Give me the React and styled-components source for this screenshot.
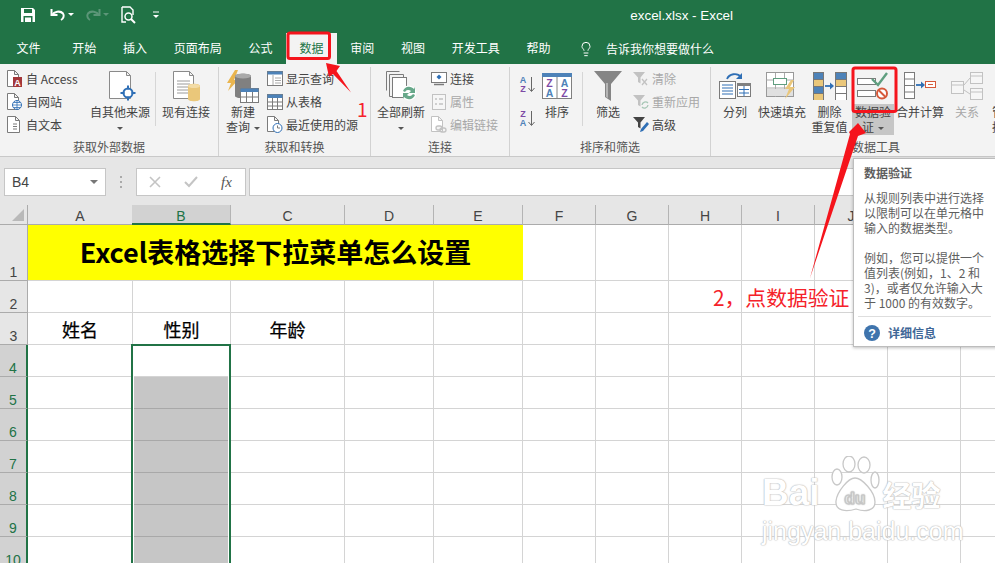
import React from "react";
import styled, { createGlobalStyle } from "styled-components";
import { Lightbulb } from "lucide-react";

const GREEN = "#217346";
const CJK = `"Noto Sans CJK SC", "Liberation Sans", sans-serif`;

const Global = createGlobalStyle`
  html, body { margin: 0; padding: 0; background: #fff; }
  body { font-family: ${CJK}; }
`;

const Page = styled.div`
  position: relative;
  width: 995px;
  height: 563px;
  overflow: hidden;
  background: #fff;
`;

/* title bar */
const TitleBar = styled.div`
  height: 32px;
  padding-bottom: 2px;
  box-sizing: border-box;
  background: ${GREEN};
  display: flex;
  align-items: center;
  color: #fff;
`;
const QuickBar = styled.div`
  display: flex;
  align-items: center;
  padding-left: 20px;
`;
const QuickItem = styled.span`
  display: flex;
  margin-left: ${(p) => p.$ml || 0}px;
`;
const FileName = styled.div`
  margin-left: auto;
  padding-right: 262px;
  font-size: 13.4px;
  font-family: "Liberation Sans", sans-serif;
`;

/* tabs */
const TabBar = styled.div`
  height: 32px;
  background: ${GREEN};
  display: flex;
  align-items: flex-end;
  padding-left: 3px;
`;
const Tab = styled.div`
  height: 31px;
  line-height: 30px;
  padding: 0 13.4px;
  font-size: 12px;
  color: ${(p) => (p.$active ? GREEN : "#fff")};
  background: ${(p) => (p.$active ? "#f3f3f3" : "transparent")};
  margin-right: ${(p) => p.$gap || 0}px;
`;
const TellMe = styled.div`
  display: flex;
  align-items: center;
  gap: 12px;
  margin-left: 14px;
  height: 31px;
  font-size: 12px;
  color: #fff;
`;

/* ribbon */
const Ribbon = styled.div`
  height: 92px;
  background: #f3f3f3;
  border-bottom: 1px solid #c9c9c9;
  box-sizing: content-box;
  display: flex;
  overflow: hidden;
  color: #444;
  font-size: 12px;
`;
const Group = styled.div`
  flex: none;
  width: ${(p) => p.$w}px;
  height: 89px;
  margin-top: 3px;
  box-sizing: border-box;
  border-right: ${(p) => (p.$last ? "none" : "1px solid #d2d2d2")};
  display: flex;
  flex-direction: column;
`;
const GroupBody = styled.div`
  flex: 1;
  display: flex;
  padding-left: ${(p) => p.$pad || 0}px;
`;
const GroupLabel = styled.div`
  height: 19px;
  line-height: 19px;
  text-align: center;
  color: #555;
  white-space: nowrap;
`;
const Large = styled.div`
  flex: none;
  width: ${(p) => p.$w}px;
  display: flex;
  flex-direction: column;
  align-items: center;
  white-space: nowrap;
  color: ${(p) => (p.$dim ? "#a8a8a8" : "#444")};
`;
const LargeIcon = styled.div`
  height: 37px;
  display: flex;
  align-items: center;
  justify-content: center;
`;
const LargeLabel = styled.div`
  line-height: 15px;
  text-align: center;
  align-self: stretch;
  height: ${(p) => (p.$active ? "31px" : "auto")};
  background: ${(p) => (p.$active ? "#c6c6c6" : "transparent")};
`;
const CutLabel = styled.div`
  line-height: 15px;
  align-self: stretch;
  padding-left: 4px;
  text-align: left;
`;
const Caret = styled.span`
  display: inline-block;
  width: 0;
  height: 0;
  margin: 0 0 2px 4px;
  border-left: 3px solid transparent;
  border-right: 3px solid transparent;
  border-top: 3px solid #555;
`;
const CaretLine = styled.div`
  line-height: 15px;
  height: 15px;
  text-align: center;
  ${Caret} { margin-left: 0; }
`;
const SmallCol = styled.div`
  flex: none;
  width: ${(p) => p.$w}px;
  display: flex;
  flex-direction: column;
`;
const SmallItem = styled.div`
  height: ${(p) => p.$h || 23}px;
  display: flex;
  align-items: center;
  gap: 3px;
  padding-left: ${(p) => p.$pad || 0}px;
  white-space: nowrap;
  color: ${(p) => (p.$dim ? "#a8a8a8" : "#444")};
  svg { flex: none; }
`;
const Divider = styled.div`
  flex: none;
  width: 1px;
  height: 54px;
  margin: 5px 0 0 ${(p) => p.$ml || 0}px;
  background: #d6d6d6;
`;

/* formula bar */
const FormulaBar = styled.div`
  height: 48px;
  background: #e6e6e6;
  display: flex;
  padding: 11px 0 0 4px;
  box-sizing: border-box;
`;
const NameBox = styled.div`
  width: 102px;
  height: 28px;
  box-sizing: border-box;
  background: #fff;
  border: 1px solid #c6c6c6;
  display: flex;
  align-items: center;
  justify-content: space-between;
  padding: 0 7px;
  font: 14px "Liberation Sans", sans-serif;
  color: #444;
`;
const NameArrow = styled.span`
  width: 0;
  height: 0;
  border-left: 4px solid transparent;
  border-right: 4px solid transparent;
  border-top: 4px solid #777;
`;
const Grip = styled.div`
  width: 2px;
  margin: 8px 14px 0 14px;
  height: 12px;
  background: repeating-linear-gradient(#aaa 0 2px, transparent 2px 5px);
`;
const FxBox = styled.div`
  width: 110px;
  height: 28px;
  box-sizing: border-box;
  background: #fff;
  border: 1px solid #c6c6c6;
  display: flex;
  align-items: center;
  padding-left: 12px;
  gap: 23px;
  color: #bbb;
`;
const FxLabel = styled.span`
  font: italic 15px "Liberation Serif", serif;
  color: #555;
`;
const FormulaInput = styled.div`
  flex: 1;
  height: 28px;
  margin-left: 3px;
  box-sizing: border-box;
  background: #fff;
  border: 1px solid #c6c6c6;
  border-right: none;
`;

/* sheet */
const Sheet = styled.div`
  height: 358px;
  overflow: hidden;
  display: grid;
  grid-template-columns: ${(p) => p.$cols};
  grid-template-rows: ${(p) => p.$rows};
  background: #fff;
`;
const Corner = styled.div`
  background: #e6e6e6;
  border-bottom: 1px solid #ababab;
  border-right: 1px solid #ababab;
  position: relative;
  box-sizing: border-box;
  &::after {
    content: "";
    position: absolute;
    right: 3px;
    bottom: 3px;
    border-style: solid;
    border-width: 0 0 12px 12px;
    border-color: transparent transparent #b9b9b9 transparent;
  }
`;
const ColHead = styled.div`
  box-sizing: border-box;
  padding-top: 2px;
  margin-left: ${(p) => (p.$sel ? "-1px" : 0)};
  background: ${(p) => (p.$sel ? "#d2d2d2" : "#e6e6e6")};
  color: ${(p) => (p.$sel ? GREEN : "#444")};
  border-right: 1px solid #b4b4b4;
  border-bottom: ${(p) => (p.$sel ? `2px solid ${GREEN}` : "1px solid #ababab")};
  font: 14px/19px "Liberation Sans", sans-serif;
  text-align: center;
`;
const RowHead = styled.div`
  box-sizing: border-box;
  background: ${(p) => (p.$sel ? "#d2d2d2" : "#e6e6e6")};
  color: ${(p) => (p.$sel ? GREEN : "#444")};
  border-bottom: 1px solid #ababab;
  border-right: ${(p) => (p.$sel ? `2px solid ${GREEN}` : "1px solid #ababab")};
  font: 14px/16px "Liberation Sans", sans-serif;
  text-align: center;
  display: flex;
  align-items: flex-end;
  justify-content: center;
`;
const Cell = styled.div`
  box-sizing: border-box;
  border-right: 1px solid #d4d4d4;
  border-bottom: 1px solid #d4d4d4;
`;
const TitleCell = styled.div`
  grid-column: span 5;
  background: #ffff00;
  border-bottom: 1px solid #d4d4d4;
  box-sizing: border-box;
  font-size: 27px;
  font-weight: 700;
  color: #000;
  text-align: center;
  line-height: 54px;
  white-space: nowrap;
`;
const HeadCell = styled(Cell)`
  font-size: 18px;
  line-height: 32px;
  text-align: center;
  color: #000;
  -webkit-text-stroke: 0.25px #000;
`;
const SelCell = styled.div`
  box-sizing: border-box;
  margin: ${(p) => (p.$first ? "-1px" : "0")} 0 0 -2px;
  border-left: 2px solid ${GREEN};
  border-right: 2px solid ${GREEN};
  border-top: ${(p) => (p.$first ? `2px solid ${GREEN}` : "none")};
  padding: 0 1px;
`;
const SelFill = styled.div`
  height: 100%;
  box-sizing: border-box;
  background: ${(p) => (p.$fill ? "#c6c6c6" : "#fff")};
  border-bottom: 1px solid ${(p) => (p.$fill ? "#a8a8a8" : "#d4d4d4")};
`;

/* overlays */
const Tooltip = styled.div`
  position: absolute;
  left: 853px;
  top: 158px;
  width: 150px;
  height: 189px;
  box-sizing: border-box;
  background: #fff;
  border: 1px solid #bdbdbd;
  box-shadow: 0 1px 3px rgba(0, 0, 0, 0.25);
  padding: 6px 0 0 10px;
  color: #5e5e5e;
  font-size: 12px;
  z-index: 3;
`;
const TipTitle = styled.div`
  font-weight: 700;
  line-height: 16px;
  margin-bottom: 9px;
`;
const TipLine = styled.div`
  line-height: 15.2px;
  height: 15.2px;
  white-space: nowrap;
  margin-bottom: ${(p) => (p.$gap ? "14px" : 0)};
`;
const TipRule = styled.div`
  margin: 6px 11px 0 -6px;
  height: 1px;
  background: #dedede;
`;
const TipLink = styled.div`
  display: flex;
  align-items: center;
  gap: 8px;
  margin-top: 7px;
  color: #3f6797;
  font-weight: 700;
`;
const Drawing = styled.svg`
  position: absolute;
  left: 0;
  top: 0;
  z-index: 4;
  pointer-events: none;
`;
const Note = styled.div`
  position: absolute;
  left: ${(p) => p.$x}px;
  top: ${(p) => p.$y}px;
  color: #f5222a;
  font-size: ${(p) => p.$size}px;
  line-height: 1;
  white-space: nowrap;
  z-index: 2;
`;
const Mark = styled.div`
  position: absolute;
  left: 762px;
  top: 456px;
  z-index: 1;
  color: #fff;
  font-family: "Liberation Sans", sans-serif;
  text-shadow: 0 0 1px #bbb, 0 0 1px #bbb, 0 0 2px #ccc;
`;
const MarkTop = styled.div`
  display: flex;
  align-items: flex-end;
  font-weight: 700;
  font-size: 37px;
  line-height: 42px;
  height: 58px;
`;
const MarkPaw = styled.svg`
  margin-left: 10px;
`;
const MarkCn = styled.span`
  font-family: ${CJK};
  font-size: 29px;
  margin-left: 3px;
  line-height: 40px;
`;
const MarkUrl = styled.div`
  font-size: 25px;
  line-height: 28px;
  margin-top: 3px;
`;

/* icons */
const gray = "#7b7b7b";
const blue = "#2f6fb5";
const tan = "#eac77a";
const dim = "#c2c2c2";

const Sheetlet = ({ x = 0.5, y = 0.5, w = 11, h = 16, c = gray, f = "#fff" }) => (
  <path d={`M${x} ${y}h${w - 4}l4 4v${h - 4}h-${w}z M${x + w - 4} ${y}v4h4`} fill={f} stroke={c} />
);

const SaveIcon = () => (
  <svg width="16" height="16" viewBox="0 0 16 16">
    <path d="M1 1h12l2 2v12H1z" fill="#fff" />
    <rect x="4" y="2" width="8" height="4" fill={GREEN} />
    <rect x="3.5" y="9" width="9" height="6" fill={GREEN} />
    <rect x="5" y="10.5" width="6" height="4.5" fill="#fff" />
  </svg>
);
const UndoIcon = ({ c = "#fff" }) => (
  <svg width="24" height="14" viewBox="0 0 24 14">
    <path d="M1.500 1v6h6" fill="none" stroke={c} strokeWidth="2" />
    <path d="M2 7c2-3 8-5 11-1.500 1.500 2 .5 5-2 6.500" fill="none" stroke={c} strokeWidth="2" />
    <path d="M18 5h6l-3 3z" fill={c} />
  </svg>
);
const RedoIcon = () => (
  <svg width="24" height="14" viewBox="0 0 24 14">
    <path d="M14.500 1v6h-6" fill="none" stroke="#5c9678" strokeWidth="2" />
    <path d="M14 7c-2-3-8-5-11-1.500-1.500 2-.5 5 2 6.500" fill="none" stroke="#5c9678" strokeWidth="2" />
    <path d="M18 5h6l-3 3z" fill="#5c9678" />
  </svg>
);
const PreviewIcon = () => (
  <svg width="16" height="18" viewBox="0 0 16 18">
    <path d="M1 1h8l3 3v5M5 16H1V1" fill="none" stroke="#fff" strokeWidth="1.400" />
    <circle cx="7.500" cy="10.500" r="3.500" fill="none" stroke="#fff" strokeWidth="1.500" />
    <path d="M10 13l4 4" stroke="#fff" strokeWidth="2" />
  </svg>
);
const CustomizeIcon = () => (
  <svg width="8" height="8" viewBox="0 0 8 8">
    <path d="M1 1h6" stroke="#fff" />
    <path d="M1 4h6l-3 3z" fill="#fff" />
  </svg>
);
const AccessIcon = () => (
  <svg width="16" height="18" viewBox="0 0 16 18">
    <Sheetlet w={11} h={16} />
    <rect x="6" y="7" width="9" height="10" fill="#a4373a" />
    <text x="10.500" y="15.500" fontSize="9" fontWeight="700" fill="#fff" textAnchor="middle" fontFamily="Liberation Sans">A</text>
  </svg>
);
const WebIcon = () => (
  <svg width="16" height="18" viewBox="0 0 16 18">
    <Sheetlet w={11} h={16} />
    <circle cx="10" cy="12" r="4.500" fill="#fff" stroke={blue} />
    <path d="M5.500 12h9M10 7.500v9M7 9.500h6M7 14.500h6" stroke={blue} strokeWidth=".8" />
  </svg>
);
const TextIcon = () => (
  <svg width="16" height="18" viewBox="0 0 16 18">
    <Sheetlet w={12} h={16} />
    <path d="M6 8h4M6 10.500h4M6 13h4" stroke={gray} />
  </svg>
);
const OtherIcon = () => (
  <svg width="36" height="32" viewBox="0 0 36 32">
    <Sheetlet x={7.500} y={1.500} w={21} h={27} c="#8a8a8a" />
    <circle cx="26" cy="23" r="4.500" fill="#fff" stroke={blue} strokeWidth="2" />
    <path d="M26 15.500v4M26 26.500v4M18.500 23h4M29.500 23h4" stroke={blue} strokeWidth="2" />
  </svg>
);
const ExistingIcon = () => (
  <svg width="32" height="32" viewBox="0 0 32 32">
    <Sheetlet x={3.500} y={1.500} w={20} h={27} c="#8a8a8a" />
    <path d="M7 11h13M7 14h13M7 17h11M7 20h11M7 23h11" stroke="#9a9a9a" />
    <path d="M18 16c0-3 12-3 12 0v13c0 3-12 3-12 0z" fill={tan} />
    <ellipse cx="24" cy="16" rx="6" ry="2" fill="#f3dca6" />
  </svg>
);
const NewQueryIcon = () => (
  <svg width="34" height="34" viewBox="0 0 34 34">
    <path d="M9 1L1 14h4l-3 8 10-11H8l4-10z" fill="#eab54e" />
    <path d="M9 7c0-3 16-3 16 0v20c0 3-16 3-16 0z" fill="#808080" />
    <ellipse cx="17" cy="7" rx="8" ry="2.500" fill="#a9a9a9" />
    <rect x="14.500" y="19.500" width="18" height="14" fill="#fff" stroke={gray} />
    <rect x="14.500" y="19.500" width="18" height="3.500" fill="#4d82b8" />
    <path d="M14.500 28h18M20.500 23v10M26.500 23v10" stroke={gray} />
  </svg>
);
const ShowQueryIcon = () => (
  <svg width="16" height="16" viewBox="0 0 16 16">
    <rect x=".5" y=".5" width="15" height="14" fill="#fff" stroke={gray} />
    <rect x=".5" y=".5" width="15" height="3" fill="#4d82b8" />
    <path d="M6 4v10M8 7h6M8 9.500h6M8 12h6" stroke="#aaa" />
  </svg>
);
const FromTableIcon = () => (
  <svg width="16" height="16" viewBox="0 0 16 16">
    <rect x=".5" y=".5" width="15" height="15" fill="#fff" stroke={gray} />
    <rect x=".5" y=".5" width="15" height="3.500" fill="#4d82b8" />
    <path d="M.5 8h15M.5 12h15M5.500 4v12M10.500 4v12" stroke={gray} />
  </svg>
);
const RecentIcon = () => (
  <svg width="16" height="18" viewBox="0 0 16 18">
    <Sheetlet w={11} h={15} />
    <circle cx="10.500" cy="12" r="4.500" fill="#fff" stroke={blue} />
    <path d="M10.500 9.500V12h2.500" fill="none" stroke={gray} />
  </svg>
);
const RefreshIcon = () => (
  <svg width="34" height="32" viewBox="0 0 34 32">
    <path d="M2.500 1.500h13M2.500 1.500v19M5.500 4.500h14v22h-14z" fill="none" stroke={gray} />
    <rect x="8.500" y="7.500" width="14" height="20" fill="#fff" stroke={gray} />
    <circle cx="25" cy="23" r="7.500" fill="#fff" />
    <path d="M19 21a6.500 6.500 0 0 1 11-2l1-2v6h-6l2-2a4 4 0 0 0-6 1z" fill="#67a88a" />
    <path d="M31 25a6.500 6.500 0 0 1-11 2l-1 2v-6h6l-2 2a4 4 0 0 0 6-1z" fill="#67a88a" />
  </svg>
);
const ConnIcon = () => (
  <svg width="16" height="16" viewBox="0 0 16 16">
    <rect x=".5" y="1.500" width="15" height="10" fill="#fff" stroke={gray} />
    <path d="M8 3.500l2.500 2.500L8 8.500 5.500 6z" fill={blue} />
    <path d="M3 13.500h10" stroke={gray} strokeWidth="1.500" />
  </svg>
);
const PropsIcon = () => (
  <svg width="16" height="16" viewBox="0 0 16 16">
    <rect x="1.500" y=".5" width="13" height="15" fill="#f6f6f6" stroke={dim} />
    <path d="M4 5h2M8 5h4M4 10h2M8 10h4" stroke={dim} strokeWidth="1.500" />
  </svg>
);
const LinksIcon = () => (
  <svg width="16" height="18" viewBox="0 0 16 18">
    <Sheetlet w={11} h={15} c={dim} />
    <rect x="5" y="10" width="6" height="4" rx="2" fill="#f3f3f3" stroke={dim} strokeWidth="1.300" />
    <rect x="9" y="12" width="6" height="4" rx="2" fill="none" stroke={dim} strokeWidth="1.300" />
  </svg>
);
const letterFont = { fontFamily: "Liberation Sans", fontWeight: 700, textAnchor: "middle" };
const SortUpIcon = ({ top, bottom, topC, bottomC }) => (
  <svg width="18" height="18" viewBox="0 0 18 18">
    <text x="5" y="8" fontSize="9" fill={topC} {...letterFont}>{top}</text>
    <text x="5" y="17" fontSize="9" fill={bottomC} {...letterFont}>{bottom}</text>
    <path d="M13.500 2v14M10.500 13l3 3.500 3-3.500" fill="none" stroke="#666" />
  </svg>
);
const SortBigIcon = () => (
  <svg width="30" height="26" viewBox="0 0 30 26">
    <rect x=".5" y=".5" width="29" height="25" fill="#fff" stroke="#808080" />
    <rect x="0" y="0" width="30" height="4" fill="#4d82b8" />
    <path d="M15 4v22" stroke="#808080" />
    <text x="7.500" y="14" fontSize="10.500" fill="#7d4aa5" {...letterFont}>Z</text>
    <text x="7.500" y="24" fontSize="10.500" fill="#4d82b8" {...letterFont}>A</text>
    <text x="22.500" y="14" fontSize="10.500" fill="#4d82b8" {...letterFont}>A</text>
    <text x="22.500" y="24" fontSize="10.500" fill="#7d4aa5" {...letterFont}>Z</text>
  </svg>
);
const FunnelIcon = () => (
  <svg width="30" height="32" viewBox="0 0 30 32">
    <path d="M1 1h28L18 14v17l-6-4V14z" fill="#858585" />
    <path d="M13 13h2v15l-2-1z" fill="#b5b5b5" />
  </svg>
);
const ClearIcon = () => (
  <svg width="16" height="16" viewBox="0 0 16 16">
    <path d="M0 1h12L7.500 6.500v6L5 11V6.500z" fill={dim} />
    <path d="M9 8l5 6M14 8l-5 6" stroke={dim} strokeWidth="1.300" />
  </svg>
);
const ReapplyIcon = () => (
  <svg width="16" height="16" viewBox="0 0 16 16">
    <path d="M0 1h12L7.500 6.500v6L5 11V6.500z" fill={dim} />
    <path d="M9 11a3.500 3.500 0 0 1 6-2M15 11a3.500 3.500 0 0 1-6 2" fill="none" stroke="#a7c7b6" strokeWidth="1.300" />
  </svg>
);
const AdvancedIcon = () => (
  <svg width="16" height="17" viewBox="0 0 16 17">
    <path d="M0 1h12L7.500 6.500v6L5 11V6.500z" fill="#444" />
    <path d="M14 6l2 2-6 7-3 1 1-3z" fill={blue} />
  </svg>
);
const SplitIcon = () => (
  <svg width="32" height="28" viewBox="0 0 32 28">
    <rect x=".5" y="9.500" width="16" height="17" fill="#fff" stroke={gray} />
    <path d="M3 13h11M3 16h11M3 19h11M3 22h11" stroke={blue} />
    <rect x="18.500" y="11.500" width="13" height="13" fill="#fff" stroke={gray} />
    <rect x="18" y="11" width="14" height="3" fill="#808080" />
    <path d="M20 17.500h10M20 21h10M25 14v10" stroke={blue} />
    <path d="M8 7c2-5 10-7 14-2" fill="none" stroke={blue} strokeWidth="1.800" />
    <path d="M23 1v6h-6z" fill={blue} />
  </svg>
);
const FlashIcon = () => (
  <svg width="32" height="28" viewBox="0 0 32 28">
    <rect x=".5" y=".5" width="27" height="24" fill="#fff" stroke="#999" />
    <path d="M.5 8h27M.5 16h27M9.500 1v24M18.500 1v24" stroke="#aaa" />
    <rect x="7.500" y="6.500" width="13" height="6" fill="#fff" stroke="#5f9e7f" />
    <rect x="1" y="17" width="26" height="7" fill="#e0e0e0" />
    <path d="M25 8l-6 9h4l-4 10 10-12h-5l4-7z" fill="#eac77a" />
  </svg>
);
const DedupeIcon = () => (
  <svg width="34" height="28" viewBox="0 0 34 28">
    {[0, 1, 2, 3].map((i) => (
      <rect key={i} x=".5" y={0.5 + i * 7} width="10" height="7" fill={i % 2 ? tan : "#4d82b8"} stroke="#777" />
    ))}
    {[0, 1, 2, 3].map((i) => (
      <rect key={i} x="22.500" y={0.5 + i * 7} width="11" height="7" fill={i === 0 ? "#4d82b8" : i === 1 ? tan : "#fff"} stroke="#777" />
    ))}
    <path d="M12 14h6" stroke={blue} strokeWidth="1.800" />
    <path d="M17 10.500l4 3.500-4 3.500z" fill={blue} />
  </svg>
);
const ValidateIcon = () => (
  <svg width="32" height="28" viewBox="0 0 32 28">
    <rect x=".5" y="6.500" width="18" height="6" fill="#fff" stroke={gray} />
    <rect x=".5" y="18.500" width="18" height="6" fill="#fff" stroke={gray} />
    <path d="M15 7l6 6L30 1" fill="none" stroke="#5f9e7f" strokeWidth="2.400" />
    <circle cx="25" cy="21.500" r="5" fill="#fff" stroke="#d6593a" strokeWidth="2" />
    <path d="M21.500 18l7 7" stroke="#d6593a" strokeWidth="2" />
  </svg>
);
const ConsolidateIcon = () => (
  <svg width="32" height="28" viewBox="0 0 32 28">
    <rect x=".5" y=".5" width="10" height="26" fill="#fff" stroke={gray} />
    <path d="M.5 7h10M.5 13.500h10M.5 20h10" stroke={gray} />
    <path d="M12 13h6" stroke={blue} strokeWidth="1.800" />
    <path d="M17 9.500l4 3.500-4 3.500z" fill={blue} />
    <rect x="21.500" y="9.500" width="10" height="6" fill="#fff" stroke="#d6593a" />
    <path d="M24 12.500h5" stroke="#d6593a" />
  </svg>
);
const RelationIcon = () => (
  <svg width="32" height="28" viewBox="0 0 32 28">
    <rect x=".5" y="9.500" width="12" height="12" fill="#f6f6f6" stroke={dim} />
    <rect x="19.500" y=".5" width="12" height="11" fill="#f6f6f6" stroke={dim} />
    <rect x="19.500" y="16.500" width="12" height="11" fill="#f6f6f6" stroke={dim} />
    <path d="M.5 13h12M19.500 4h12M19.500 20h12M13 13l6-7M13 18l6 4" stroke={dim} />
  </svg>
);
const HelpIcon = () => (
  <svg width="16" height="16" viewBox="0 0 16 16">
    <circle cx="8" cy="8" r="8" fill="#3f74ad" />
    <text x="8" y="12.500" fontSize="12.500" fontWeight="700" fill="#fff" textAnchor="middle" fontFamily="Liberation Sans">?</text>
  </svg>
);
const CrossIcon = () => (
  <svg width="12" height="12" viewBox="0 0 12 12">
    <path d="M1 1l10 10M11 1L1 11" stroke="#c4c4c4" strokeWidth="1.600" />
  </svg>
);
const CheckIcon = () => (
  <svg width="14" height="12" viewBox="0 0 14 12">
    <path d="M1 6l4 4 8-9" fill="none" stroke="#c4c4c4" strokeWidth="2" />
  </svg>
);

const tabs = ["文件", "开始", "插入", "页面布局", "公式", "数据", "审阅", "视图", "开发工具", "帮助"];
const cols = [
  ["A", 105], ["B", 98], ["C", 114], ["D", 89], ["E", 89], ["F", 73],
  ["G", 73], ["H", 73], ["I", 73], ["J", 73], ["K", 73], ["L", 73],
];
const rows = [
  [1, 56], [2, 32], [3, 32], [4, 32], [5, 32], [6, 32], [7, 32], [8, 32], [9, 32], [10, 32],
];
const headings = { A: "姓名", B: "性别", C: "年龄" };
const tipLines = [
  ["从规则列表中进行选择"],
  ["以限制可以在单元格中"],
  ["输入的数据类型。", true],
  ["例如，您可以提供一个"],
  ["值列表(例如，1、2 和"],
  ["3)，或者仅允许输入大"],
  ["于 1000 的有效数字。"],
];

const SheetRow = ({ num }) => {
  const sel = num >= 4;
  return (
    <>
      <RowHead $sel={sel}>{num}</RowHead>
      {num === 1 && <TitleCell>Excel表格选择下拉菜单怎么设置</TitleCell>}
      {cols.slice(num === 1 ? 5 : 0).map(([c]) => {
        if (sel && c === "B") {
          return (
            <SelCell key={c} $first={num === 4}>
              <SelFill $fill={num > 4} />
            </SelCell>
          );
        }
        if (num === 3 && headings[c]) return <HeadCell key={c}>{headings[c]}</HeadCell>;
        return <Cell key={c} />;
      })}
    </>
  );
};

export default function App() {
  return (
    <Page>
      <Global />
      <TitleBar>
        <QuickBar>
          <QuickItem><SaveIcon /></QuickItem>
          <QuickItem $ml={14}><UndoIcon /></QuickItem>
          <QuickItem $ml={11}><RedoIcon /></QuickItem>
          <QuickItem $ml={12}><PreviewIcon /></QuickItem>
          <QuickItem $ml={15}><CustomizeIcon /></QuickItem>
        </QuickBar>
        <FileName>excel.xlsx - Excel</FileName>
      </TitleBar>

      <TabBar>
        {tabs.map((t, i) => (
          <Tab key={t} $active={t === "数据"} $gap={i === 0 ? 5 : 0}>{t}</Tab>
        ))}
        <TellMe>
          <Lightbulb size={16} strokeWidth={1.5} />
          告诉我你想要做什么
        </TellMe>
      </TabBar>

      <Ribbon>
        <Group $w={219}>
          <GroupBody $pad={6}>
            <SmallCol $w={79}>
              <SmallItem $pad={1}><AccessIcon />自 Access</SmallItem>
              <SmallItem $pad={1}><WebIcon />自网站</SmallItem>
              <SmallItem $pad={1}><TextIcon />自文本</SmallItem>
            </SmallCol>
            <Large $w={70}>
              <LargeIcon><OtherIcon /></LargeIcon>
              <LargeLabel>自其他来源</LargeLabel>
              <CaretLine><Caret /></CaretLine>
            </Large>
            <Divider />
            <Large $w={60}>
              <LargeIcon><ExistingIcon /></LargeIcon>
              <LargeLabel>现有连接</LargeLabel>
            </Large>
          </GroupBody>
          <GroupLabel>获取外部数据</GroupLabel>
        </Group>

        <Group $w={152}>
          <GroupBody>
            <Large $w={48}>
              <LargeIcon><NewQueryIcon /></LargeIcon>
              <LargeLabel>新建</LargeLabel>
              <LargeLabel>查询<Caret /></LargeLabel>
            </Large>
            <SmallCol $w={100}>
              <SmallItem><ShowQueryIcon />显示查询</SmallItem>
              <SmallItem><FromTableIcon />从表格</SmallItem>
              <SmallItem><RecentIcon />最近使用的源</SmallItem>
            </SmallCol>
          </GroupBody>
          <GroupLabel>获取和转换</GroupLabel>
        </Group>

        <Group $w={139}>
          <GroupBody>
            <Large $w={60}>
              <LargeIcon><RefreshIcon /></LargeIcon>
              <LargeLabel>全部刷新</LargeLabel>
              <CaretLine><Caret /></CaretLine>
            </Large>
            <SmallCol $w={78}>
              <SmallItem><ConnIcon />连接</SmallItem>
              <SmallItem $dim><PropsIcon />属性</SmallItem>
              <SmallItem $dim><LinksIcon />编辑链接</SmallItem>
            </SmallCol>
          </GroupBody>
          <GroupLabel>连接</GroupLabel>
        </Group>

        <Group $w={201}>
          <GroupBody $pad={8}>
            <SmallCol $w={19}>
              <SmallItem $h={34}>
                <SortUpIcon top="A" bottom="Z" topC="#4d82b8" bottomC="#7d4aa5" />
              </SmallItem>
              <SmallItem $h={34}>
                <SortUpIcon top="Z" bottom="A" topC="#7d4aa5" bottomC="#4d82b8" />
              </SmallItem>
            </SmallCol>
            <Large $w={40}>
              <LargeIcon><SortBigIcon /></LargeIcon>
              <LargeLabel>排序</LargeLabel>
            </Large>
            <Divider $ml={5} />
            <Large $w={50}>
              <LargeIcon><FunnelIcon /></LargeIcon>
              <LargeLabel>筛选</LargeLabel>
            </Large>
            <SmallCol $w={76}>
              <SmallItem $dim><ClearIcon />清除</SmallItem>
              <SmallItem $dim><ReapplyIcon />重新应用</SmallItem>
              <SmallItem><AdvancedIcon />高级</SmallItem>
            </SmallCol>
          </GroupBody>
          <GroupLabel>排序和筛选</GroupLabel>
        </Group>

        <Group $w={330} $last>
          <GroupBody $pad={2}>
            <Large $w={44}>
              <LargeIcon><SplitIcon /></LargeIcon>
              <LargeLabel>分列</LargeLabel>
            </Large>
            <Large $w={50}>
              <LargeIcon><FlashIcon /></LargeIcon>
              <LargeLabel>快速填充</LargeLabel>
            </Large>
            <Large $w={45}>
              <LargeIcon><DedupeIcon /></LargeIcon>
              <LargeLabel>删除</LargeLabel>
              <LargeLabel>重复值</LargeLabel>
            </Large>
            <Large $w={42}>
              <LargeIcon><ValidateIcon /></LargeIcon>
              <LargeLabel $active>数据验<br />证<Caret /></LargeLabel>
            </Large>
            <Large $w={52}>
              <LargeIcon><ConsolidateIcon /></LargeIcon>
              <LargeLabel>合并计算</LargeLabel>
            </Large>
            <Large $w={42} $dim>
              <LargeIcon><RelationIcon /></LargeIcon>
              <LargeLabel>关系</LargeLabel>
            </Large>
            <Large $w={50}>
              <LargeIcon />
              <CutLabel>管理数</CutLabel>
              <CutLabel>据模型</CutLabel>
            </Large>
          </GroupBody>
          <GroupLabel>数据工具</GroupLabel>
        </Group>
      </Ribbon>

      <FormulaBar>
        <NameBox>B4<NameArrow /></NameBox>
        <Grip />
        <FxBox>
          <CrossIcon />
          <CheckIcon />
          <FxLabel>fx</FxLabel>
        </FxBox>
        <FormulaInput />
      </FormulaBar>

      <Sheet
        $cols={`28px ${cols.map((c) => `${c[1]}px`).join(" ")}`}
        $rows={`20px ${rows.map((r) => `${r[1]}px`).join(" ")}`}
      >
        <Corner />
        {cols.map(([c]) => (
          <ColHead key={c} $sel={c === "B"}>{c}</ColHead>
        ))}
        {rows.map(([n]) => (
          <SheetRow key={n} num={n} />
        ))}
      </Sheet>

      <Note $x={357} $y={99} $size={19}>1</Note>
      <Note $x={713} $y={287} $size={20.8}>2，点数据验证</Note>

      <Mark>
        <MarkTop>
          Bai
          <MarkPaw width="50" height="58" viewBox="0 0 50 58">
            <g fill="#fff" stroke="#c8c8c8" strokeWidth="1.300">
              <ellipse cx="7" cy="21" rx="5" ry="8" />
              <ellipse cx="19" cy="8" rx="6" ry="8" />
              <ellipse cx="34" cy="9" rx="6" ry="8" />
              <ellipse cx="45" cy="24" rx="4" ry="8" />
              <path d="M25 22c7 0 20 14 20 24 0 9-10 10-19 7-10 3-21 2-20-8 1-9 12-23 19-23z" />
            </g>
            <text x="25" y="48" fontSize="17" fontWeight="700" fill="#fff" stroke="#c8c8c8" strokeWidth=".6" textAnchor="middle" fontFamily="Liberation Sans">du</text>
          </MarkPaw>
          <MarkCn>经验</MarkCn>
        </MarkTop>
        <MarkUrl>jingyan.baidu.com</MarkUrl>
      </Mark>

      <Tooltip>
        <TipTitle>数据验证</TipTitle>
        {tipLines.map(([line, gap]) => (
          <TipLine key={line} $gap={gap}>{line}</TipLine>
        ))}
        <TipRule />
        <TipLink><HelpIcon />详细信息</TipLink>
      </Tooltip>

      <Drawing width="995" height="563" viewBox="0 0 995 563">
        <rect x="288" y="33" width="41.500" height="25.500" rx="2" fill="none" stroke="#f5141c" strokeWidth="3" />
        <rect x="853" y="68" width="43" height="43.500" rx="2" fill="none" stroke="#f5141c" strokeWidth="3" />
        <polygon points="326,63 340,66 336.500,71 351,92.500 333,74 329,77" fill="#f5141c" />
        <polygon points="858,123 866,133 858,136 810,278 850,134 849,132" fill="#f5141c" />
      </Drawing>
    </Page>
  );
}
